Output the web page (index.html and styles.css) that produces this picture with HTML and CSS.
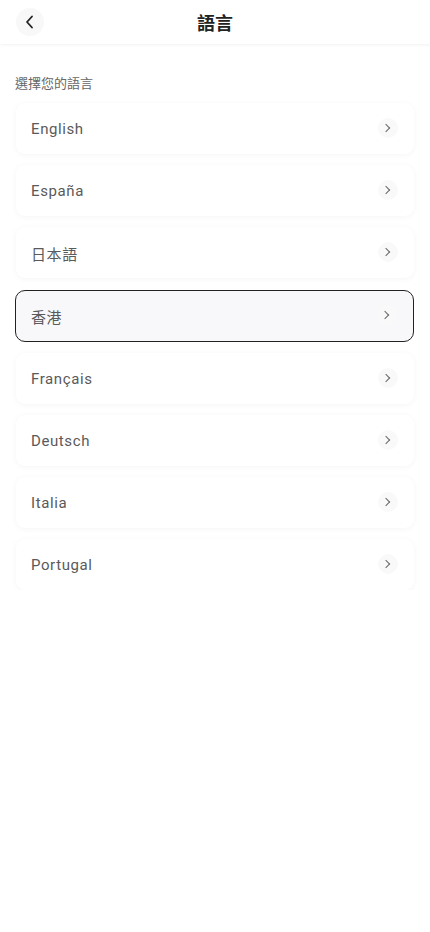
FILE: index.html
```html
<!DOCTYPE html>
<html lang="zh-Hant">
<head>
<meta charset="UTF-8">
<meta name="viewport" content="width=device-width, initial-scale=1.0">
<title>語言</title>
<link rel="stylesheet" href="styles.css">
</head>
<body>
<div class="header">
    <div class="back-btn">
        <svg width="12" height="14" viewBox="0 0 12 14"><path d="M8 1.5 L3 7 L8 12.5" fill="none" stroke="#222" stroke-width="1.8" stroke-linecap="round" stroke-linejoin="round"/></svg>
    </div>
    <h1 class="title">語言</h1>
</div>

<div class="content">
    <p class="label">選擇您的語言</p>
    <ul class="lang-list">
        <li class="lang-item"><span>English</span><i class="arrow"></i></li>
        <li class="lang-item"><span>España</span><i class="arrow"></i></li>
        <li class="lang-item"><span>日本語</span><i class="arrow"></i></li>
        <li class="lang-item active"><span>香港</span><i class="arrow"></i></li>
        <li class="lang-item"><span>Français</span><i class="arrow"></i></li>
        <li class="lang-item"><span>Deutsch</span><i class="arrow"></i></li>
        <li class="lang-item"><span>Italia</span><i class="arrow"></i></li>
        <li class="lang-item"><span>Portugal</span><i class="arrow"></i></li>
    </ul>
</div>
</body>
</html>
```

FILE: styles.css
```css
body {
    font-family: Roboto, "Noto Sans CJK TC", sans-serif;
    margin: 0;
    padding: 0;
    background: #fff;
    color: #333;
}
.header {
    height: 44px;
    display: flex;
    align-items: center;
    justify-content: center;
    position: relative;
    background: #fff;
    box-shadow: 0 1px 3px rgba(0, 0, 0, 0.06);
}
.back-btn {
    position: absolute;
    left: 16px;
    top: 8px;
    width: 28px;
    height: 28px;
    border-radius: 50%;
    background: #f8f8f9;
    display: flex;
    align-items: center;
    justify-content: center;
}
.title {
    margin: 0;
    font-size: 18px;
    font-weight: 700;
    color: #222;
    font-family: "Noto Sans CJK TC", sans-serif;
}
.content {
    padding: 29px 16px 0 16px;
}
.label {
    margin: 0 0 10px -1px;
    font-size: 13px;
    color: #666;
    line-height: 20px;
    font-family: "Noto Sans CJK TC", sans-serif;
}
.lang-list {
    list-style: none;
    margin: 0;
    padding: 0;
    display: flex;
    flex-direction: column;
    gap: 11px;
}
.lang-item {
    height: 51px;
    box-sizing: border-box;
    display: flex;
    align-items: center;
    justify-content: space-between;
    padding: 1px 16px 0 15px;
    border-radius: 9px;
    background: #fff;
    box-shadow: 0 1px 6px rgba(0, 0, 0, 0.045);
    font-size: 15px;
    letter-spacing: 0.6px;
    color: #5a5a5a;
}
.lang-item.active {
    height: 52px;
    margin: 1px 0 0 -1px;
    border: 1px solid #222;
    border-radius: 10px;
    background: #f8f8fa;
    box-shadow: none;
}
.arrow {
    width: 20px;
    height: 20px;
    margin-top: -3px;
    border-radius: 50%;
    background: #f9f9fa;
    position: relative;
}
.arrow::after {
    content: "";
    position: absolute;
    left: 5px;
    top: 7px;
    width: 5px;
    height: 5px;
    border-top: 1.3px solid #666;
    border-right: 1.3px solid #666;
    transform: rotate(45deg);
}
```
